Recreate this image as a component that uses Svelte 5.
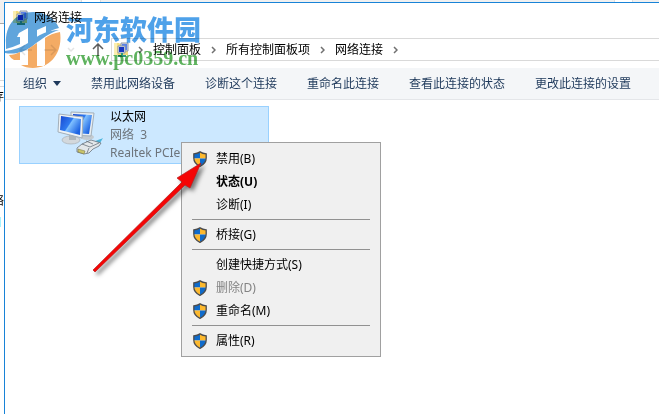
<script lang="ts">
  type MenuEntry = {
    label: string;
    shield?: boolean;
    bold?: boolean;
    disabled?: boolean;
  };

  const crumbs = ['控制面板', '所有控制面板项', '网络连接'];
  const commands = ['禁用此网络设备', '诊断这个连接', '重命名此连接', '查看此连接的状态', '更改此连接的设置'];

  const groups: MenuEntry[][] = [
    [
      { label: '禁用(B)', shield: true },
      { label: '状态(U)', bold: true },
      { label: '诊断(I)' }
    ],
    [{ label: '桥接(G)', shield: true }],
    [
      { label: '创建快捷方式(S)' },
      { label: '删除(D)', shield: true, disabled: true },
      { label: '重命名(M)', shield: true }
    ],
    [{ label: '属性(R)', shield: true }]
  ];
</script>

{#snippet folderIcon()}
  <svg class="folder-icon" width="16" height="16" viewBox="0 0 16 16" aria-hidden="true">
    <path d="M0 1h5l1 1h8v11H0z" fill="#f3dc7c" />
    <path d="M0 1h3v12H0z" fill="#fbeeb0" />
    <path d="M7 1h7v8H7z" fill="#d8dde4" stroke="#8d98ab" />
    <path d="M8 2h5v6H8z" fill="#5a83e8" />
    <path d="M4 4h7v7H4z" fill="#e4e8ee" stroke="#8d98ab" />
    <path d="M5 5h5v5H5z" fill="#1736c2" />
    <path d="M4 13h8v2H4zM7 11h2v2H7z" fill="#2f9a82" />
  </svg>
{/snippet}

{#snippet chevron()}
  <svg class="chevron" width="5" height="8" viewBox="0 0 5 8" aria-hidden="true">
    <path d="M1 1l3 3-3 3" fill="none" stroke="#707070" stroke-width="1.5" />
  </svg>
{/snippet}

{#snippet shieldIcon()}
  <svg width="14" height="16" viewBox="0 0 14 16" aria-hidden="true">
    <path d="M7 1C5 2.300 3 2.800 1 2.800V7.500H7z" fill="#0f6bcb" />
    <path d="M7 1c2 1.300 4 1.800 6 1.800V7.500H7z" fill="#fdb92e" />
    <path d="M1 7.500h6V15C3.500 13.500 1 11 1 7.500z" fill="#fdb92e" />
    <path d="M13 7.500H7V15c3.500-1.500 6-4 6-7.500z" fill="#0f6bcb" />
    <path
      d="M7 .9C5.200 2.200 3 2.800.8 2.800V7c0 4 2.500 6.600 6.200 8.300C10.700 13.600 13.200 11 13.200 7V2.800C11 2.800 8.800 2.200 7 .9z"
      fill="none"
      stroke="#4b4b4b"
      stroke-width="1.300"
    />
  </svg>
{/snippet}

<div class="desktop">
  <span class="back-tab tab-left"></span>
  <span class="back-tab tab-right"></span>
  <div class="back-edge">
    <span class="back-pane"></span>
    <span class="back-box"></span>
    <span class="back-text upper">存</span>
    <span class="back-text middle">、</span>
    <span class="back-text lower">络</span>
    <span class="back-mark"></span>
  </div>

  <main class="window">
    <header class="title-bar">
      {@render folderIcon()}
      <h1>网络连接</h1>
    </header>

    <nav class="address-row" aria-label="地址">
      <div class="history">
        <button aria-label="后退" disabled>
          <svg width="14" height="12" viewBox="0 0 14 12"><path d="M6 1L1 6l5 5M1 6h12" /></svg>
        </button>
        <button aria-label="前进" disabled>
          <svg width="14" height="12" viewBox="0 0 14 12"><path d="M8 1l5 5-5 5M13 6H1" /></svg>
        </button>
        <button aria-label="最近的位置" disabled>
          <svg width="8" height="6" viewBox="0 0 8 6"><path d="M1 1l3 3 3-3" /></svg>
        </button>
        <button class="up" aria-label="向上">
          <svg width="12" height="13" viewBox="0 0 12 13"><path d="M1 6l5-5 5 5M6 1v12" /></svg>
        </button>
      </div>
      <div class="address">
        {@render folderIcon()}
        {@render chevron()}
        {#each crumbs as crumb}
          <a href="#{crumb}">{crumb}</a>
          {@render chevron()}
        {/each}
      </div>
    </nav>

    <div class="command-bar">
      <button>组织 <span class="caret"></span></button>
      {#each commands as command}
        <button>{command}</button>
      {/each}
    </div>

    <section class="content">
      <article class="connection">
        <svg class="lan-icon" width="50" height="50" viewBox="0 0 50 50" aria-hidden="true">
          <defs>
            <linearGradient id="screen" x1="0" y1="0" x2="1" y2="0.600">
              <stop offset="0" stop-color="#1746cf" />
              <stop offset="0.500" stop-color="#2f7bf0" />
              <stop offset="0.550" stop-color="#7fc0ff" />
              <stop offset="1" stop-color="#1d63e2" />
            </linearGradient>
          </defs>
          <ellipse cx="31" cy="27" rx="7" ry="3" fill="#c3cad0" />
          <path d="M15 2l23 1-3 23-20-1z" fill="#e8edf1" stroke="#a3afb9" />
          <path d="M17 4l19 1-3 19-16-1z" fill="url(#screen)" />
          <ellipse cx="15" cy="30" rx="9" ry="4" fill="#d3d8dc" stroke="#a7afb5" stroke-width="0.700" />
          <path d="M13 22h7v8h-7z" fill="#aeb6bc" />
          <path d="M3 4l24 3-1 21-24-6z" fill="#eef2f5" stroke="#a3afb9" />
          <path d="M5 6l20 3-1 16-20-5z" fill="url(#screen)" />
          <path d="M37 34c2-4 6-4 10-6l-3 5c-2 2-4 3-7 3z" fill="#49b5dc" />
          <path d="M21 38l5-4 9-4 10 3-2 3-6 3-4 4-5 1-7-2z" fill="#e3e7ea" stroke="#68727c" stroke-width="0.800" />
          <path d="M26 34l8 3 9-4M30 31l7 3M33 38l-2 5" fill="none" stroke="#68727c" stroke-width="0.800" />
          <path d="M22 39l7 2-1 3-6-2z" fill="#c9c46a" stroke="#707044" stroke-width="0.500" />
        </svg>
        <div class="details">
          <h2>以太网</h2>
          <p>网络&nbsp; 3</p>
          <p>Realtek PCIe</p>
        </div>
      </article>
    </section>
  </main>

  <div class="context-menu" role="menu">
    {#each groups as group}
      <div class="group" role="group">
        {#each group as entry}
          <button role="menuitem" class:bold={entry.bold} disabled={entry.disabled}>
            <span class="slot">{#if entry.shield}{@render shieldIcon()}{/if}</span>
            {entry.label}
          </button>
        {/each}
      </div>
    {/each}
  </div>

  <svg class="pointer" width="120" height="120" viewBox="0 0 120 120" aria-hidden="true">
    <path d="M4 110L93 22L88 18L112 3L101 28L96 25L6 112z" fill="#f50505" stroke="#b32020" stroke-width="0.700" />
  </svg>

  <div class="watermark">
    <svg width="58" height="58" viewBox="0 0 58 58" aria-hidden="true">
      <path
        d="M2 33C1 13 13 1 29 1c12 0 22 6 26 16-5 1-9 3-13 6v-8l-9 4v9l-9 7V17l-9 5-2 4h3v7C11 35 6 37 2 38z"
        fill="#4495d6"
      />
      <path
        d="M1 40c9-1 15-3 23-8 11-8 19-13 31-13-10 3-17 9-24 14C22 41 11 44 1 42z"
        fill="#4495d6"
      />
      <path
        d="M5 44c4 0 7-1 11-3v8h-6C8 48 6 46 5 44zM24 38l9-6v23h8V27c4-3 9-5 15-6 3 20-9 36-27 36-5 0-9-1-12-3h7z"
        fill="#f39c48"
      />
    </svg>
    <div class="brand">
      <strong>河东软件园</strong>
      <span>www.pc0359.cn</span>
    </div>
  </div>
</div>

<style>
:global(body) {
  margin: 0;
  background: #fff;
}

.desktop {
  position: relative;
  box-sizing: border-box;
  display: flex;
  min-height: 100vh;
  padding: 2px 0 0 4px;
  overflow: hidden;
  background: #f0f0f0;
  color: #000;
  font: 12px/18px "Noto Sans", "Noto Sans CJK SC", sans-serif;
}

h1, h2, p {
  margin: 0;
  font-size: 12px;
  font-weight: 400;
}
button {
  padding: 0;
  border: none;
  background: none;
  color: inherit;
  font: inherit;
}
svg { flex: none; }

/* parts of the window behind */
.back-tab {
  position: absolute;
  top: 0;
  height: 2px;
  border-left: 1px solid #dcdcdc;
  border-right: 1px solid #dcdcdc;
  background: #fff;
}
.tab-left { left: 81px; width: 18px; }
.tab-right { right: 26px; width: 17px; }
.back-edge {
  position: absolute;
  top: 0;
  bottom: 0;
  left: 0;
  width: 4px;
  overflow: hidden;
}
.back-pane {
  position: absolute;
  inset: 23px 0 0;
  border-top: 1px solid #a9a9a9;
  background: #fff;
}
.back-box {
  position: absolute;
  top: 80px;
  width: 4px;
  height: 5px;
  border-top: 1px solid #d9d9d9;
  border-bottom: 1px solid #d9d9d9;
}
.back-text {
  position: absolute;
  right: 0;
}
.upper { top: 88px; }
.middle { top: 174px; }
.lower { top: 192px; }
.back-mark {
  position: absolute;
  top: 217px;
  width: 1px;
  height: 10px;
  background: #a5f3ff;
}

.window {
  position: relative;
  flex: 1;
  min-width: 0;
  border-top: 1px solid #1883d7;
  border-left: 1px solid #1883d7;
  background: #fff;
}

.title-bar {
  display: flex;
  align-items: center;
  gap: 5px;
  height: 29px;
  padding-left: 8px;
}

.address-row {
  display: flex;
  height: 23px;
  margin: 6px 0 7px;
}
.history {
  display: flex;
  align-items: center;
  gap: 10px;
  box-sizing: border-box;
  width: 106px;
  padding: 0 7px 0 14px;
}
.history button {
  display: flex;
}
.history path {
  fill: none;
  stroke: #e4e4e4;
  stroke-width: 1.5;
}
.history .up { margin-left: auto; }
.history .up path { stroke: #5c5c5c; }
.address {
  display: flex;
  flex: 1;
  align-items: center;
  gap: 10px;
  box-sizing: border-box;
  padding-left: 2px;
  border: 1px solid #d9d9d9;
  border-right: none;
}
.address .folder-icon { margin-right: -2px; }
.address a {
  color: inherit;
  text-decoration: none;
}

.command-bar {
  display: flex;
  align-items: center;
  gap: 30px;
  box-sizing: border-box;
  height: 32px;
  padding-left: 18px;
  border-bottom: 1px solid #e4e6e9;
  background: #f4f6f8;
  color: #1e395b;
  white-space: nowrap;
}
.command-bar button {
  display: flex;
  align-items: center;
  gap: 6px;
}
.caret {
  border: 4px solid transparent;
  border-top: 5px solid #1e395b;
  border-bottom: none;
}

.content { padding: 6px 14px; }
.connection {
  display: flex;
  box-sizing: border-box;
  width: 250px;
  height: 58px;
  border: 1px solid #99d1ff;
  background: #cce8ff;
}
.lan-icon { margin: 3px 4px 0 36px; }
.details {
  padding-top: 1px;
  overflow: hidden;
  white-space: nowrap;
}
.details p { color: #6d747b; }

.context-menu {
  position: absolute;
  top: 142px;
  left: 181px;
  box-sizing: border-box;
  width: 200px;
  padding: 4px 10px;
  border: 1px solid #a0a0a0;
  background: #f0f0f0;
}
.group + .group {
  margin-top: 3px;
  padding-top: 3px;
  border-top: 1px solid #919191;
}
.context-menu button {
  display: flex;
  align-items: center;
  width: 100%;
  height: 23px;
}
.context-menu button:disabled { color: #838383; }
.context-menu .bold { font-weight: 700; }
.slot {
  display: flex;
  width: 23px;
  padding-left: 1px;
}

.pointer {
  position: absolute;
  top: 160px;
  left: 89px;
  filter: drop-shadow(3px 3px 2px rgba(0, 0, 0, 0.5));
  pointer-events: none;
}

.watermark {
  position: absolute;
  top: 11px;
  left: 4px;
  display: flex;
  gap: 4px;
  opacity: 0.85;
  mix-blend-mode: multiply;
  pointer-events: none;
}
.brand {
  display: flex;
  flex-direction: column;
}
.brand strong {
  color: #2f90e6;
  font: 900 27px/36px "Noto Sans CJK SC", sans-serif;
}
.brand span {
  color: #42a542;
  font: 700 20px/22px "Liberation Serif", serif;
}
</style>
